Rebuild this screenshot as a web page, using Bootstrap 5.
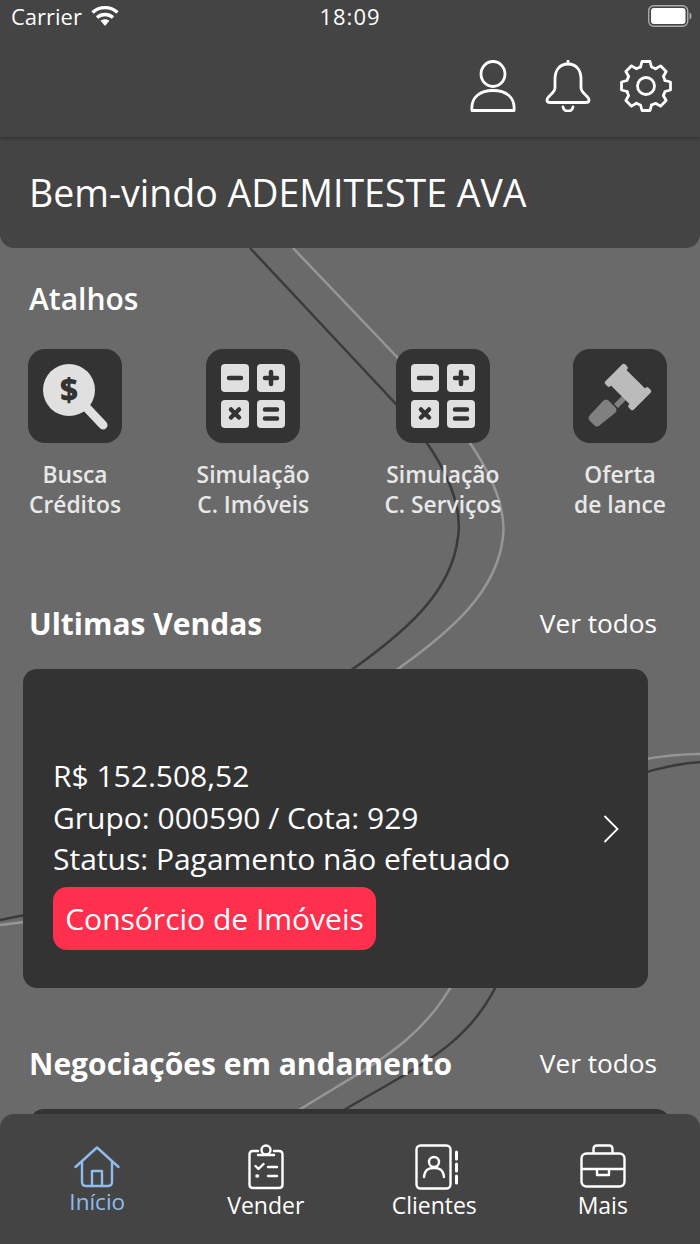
<!DOCTYPE html>
<html lang="pt-BR">
<head>
    <meta charset="UTF-8">
    <meta name="viewport" content="width=device-width, initial-scale=1.0">
    <title>Início</title>
    <link href="https://cdn.jsdelivr.net/npm/bootstrap@5.3.0/dist/css/bootstrap.min.css" rel="stylesheet">
    <style>
        html, body {
            height: 100%;
        }
        body {
            background-color: #6a6a6a;
            color: #fff;
            font-family: "Open Sans", sans-serif;
            overflow: hidden;
        }
        .phone {
            height: 1244px;
            overflow: hidden;
        }
        .bg-lines {
            left: 0;
            top: 0;
        }
        .top-head {
            height: 137px;
            background: #444;
            box-shadow: 0 1px 4px rgba(0, 0, 0, .35);
            position: relative;
        }
        .status-row {
            height: 31px;
            margin-bottom: 1px;
            padding: 0 8px 0 11px;
        }
        .status-side {
            flex: 1 1 0;
        }
        .carrier {
            font-size: 22px;
            line-height: 28px;
            gap: 9px;
        }
        .clock {
            font-size: 22px;
            line-height: 28px;
            letter-spacing: 1px;
            margin-right: 3px;
        }
        .head-icons {
            gap: 29px;
            padding: 28px 28px 0 0;
        }
        .welcome {
            height: 111px;
            background: #444;
            border-radius: 0 0 14px 14px;
            padding-left: 29px;
            font-size: 37.500px;
            line-height: 111px;
        }
        .sec-title {
            font-size: 30px;
            font-weight: 600;
            line-height: 38px;
        }
        .atalhos-title {
            padding: 32px 0 0 29px;
        }
        .shortcuts {
            padding: 31px 33px 0 28px;
        }
        .tile {
            width: 94px;
            height: 94px;
            background: #333;
            border-radius: 17px;
        }
        .short-item {
            font-size: 22.800px;
            line-height: 30px;
            font-weight: 600;
            color: #e8e8e8;
        }
        .short-mid {
            margin-left: 3px;
        }
        .short-label {
            margin-top: 17px;
            white-space: nowrap;
        }
        .sec-head {
            padding: 0 43px 0 29px;
        }
        .sec-head .sec-title {
            font-weight: 700;
        }
        .sales-head {
            margin-top: 84px;
        }
        .deals-head {
            margin-top: 56px;
        }
        .see-all {
            font-size: 26.200px;
        }
        .sale-card {
            background: #333;
            border-radius: 14px;
            height: 319px;
            width: 625px;
            margin-left: 23px;
            margin-top: 26px;
            padding: 86px 29px 0 30px;
            font-size: 30px;
            line-height: 41.500px;
        }
        .tag-pink {
            background: #ff2f4e;
            border-radius: 14px;
            height: 63px;
            width: 323px;
            line-height: 63px;
            margin-top: 7px;
            text-align: center;
        }
        .chevron {
            margin-top: 60px;
        }
        .sale-card2 {
            width: 640px;
            margin-left: 30px;
            margin-top: 25px;
        }
        .bottom-bar {
            left: 0;
            right: 0;
            bottom: 0;
            height: 130px;
            background: #444;
            border-radius: 14px 14px 0 0;
            padding: 30px 13px 0;
        }
        .tab-item {
            width: 25%;
            font-size: 23px;
            line-height: 30px;
        }
        .tab-active {
            color: #8ebcec;
            font-size: 22.500px;
        }
        .tab-ico {
            height: 46px;
        }
        .tab-active .tab-ico {
            height: 43px;
            padding-top: 2px;
        }
        .ico-shift {
            margin-left: 5px;
        }
    </style>
</head>
<body>

<div class="phone position-relative">

    <svg class="bg-lines position-absolute" width="700" height="1244" fill="none" stroke-width="2.500">
        <g stroke="#3a3a3a">
            <path d="M250 248L395 403Q415 424 427 443C452 480 462 510 458 537C452 590 410 630 340 678"/>
            <path d="M0 920L40 912L640 774Q672 764 700 762"/>
            <path d="M500 978C470 1045 420 1065 344 1110"/>
        </g>
        <g stroke="#969696">
            <path d="M293 248L397 357Q440 400 470 443C495 480 506 510 503 537C497 590 455 630 385 678"/>
            <path d="M0 925L40 920L640 760Q672 754 700 754"/>
            <path d="M456 978C420 1045 370 1065 299 1110"/>
        </g>
    </svg>

    <div class="position-relative">
        <div class="top-head">
            <div class="status-row d-flex align-items-center">
                <div class="status-side carrier d-flex align-items-center">
                    <span>Carrier</span>
                    <svg width="28" height="22" viewBox="0 0 28 22" fill="none" stroke="#fff" stroke-width="3.400">
                        <path d="M1.500 7.500C8.500 1 19.500 1 26.500 7.500"/>
                        <path d="M6 12.500C10.500 8.500 17.500 8.500 22 12.500"/>
                        <path d="M14 21l-4.400-5.200c2.600-2 6.200-2 8.800 0z" fill="#fff" stroke="none"/>
                    </svg>
                </div>
                <span class="clock">18:09</span>
                <div class="status-side d-flex justify-content-end">
                    <svg width="44" height="22" viewBox="0 0 44 22">
                        <rect x=".7" y=".7" width="39" height="20.600" rx="5" fill="none" stroke="#aaa" stroke-width="1.400"/>
                        <rect x="3" y="3" width="34.500" height="16" rx="3" fill="#fff"/>
                        <path d="M41.500 7.500c1.500.4 2 2 2 3.500s-.5 3.100-2 3.500z" fill="#aaa"/>
                    </svg>
                </div>
            </div>
            <div class="head-icons d-flex justify-content-end">
                <svg width="46" height="52" viewBox="0 0 46 52" fill="none" stroke="#fff" stroke-width="2.800">
                    <ellipse cx="23" cy="14" rx="12" ry="12.500"/>
                    <path d="M2 50.500c-1.500-14 9-20 21-20s22.500 6 21 20z" stroke-linejoin="round"/>
                </svg>
                <svg width="46" height="52" viewBox="0 0 46 52" fill="none" stroke="#fff" stroke-width="2.800" stroke-linecap="round" stroke-linejoin="round">
                    <path d="M23 1v3"/>
                    <path d="M23 4c-9 0-13 7-13 15v9c0 5-8 8-8 12 0 1.500 1 2.500 3 2.500h36c2 0 3-1 3-2.500 0-4-8-7-8-12v-9c0-8-4-15-13-15z"/>
                    <path d="M18 47c1 5.500 9 5.500 10 0"/>
                </svg>
                <svg width="52" height="52" viewBox="-26 -26 52 52" fill="none" stroke="#fff" stroke-width="2.800" stroke-linejoin="round" stroke-linecap="round">
                    <circle r="8.500"/>
                    <g id="gearTooth">
                        <path d="M-5.500-19L-4-24.500H4L5.500-19A20 20 0 0 1 9.540-17.300"/>
                    </g>
                    <use href="#gearTooth" transform="rotate(45)"/>
                    <use href="#gearTooth" transform="rotate(90)"/>
                    <use href="#gearTooth" transform="rotate(135)"/>
                    <use href="#gearTooth" transform="rotate(180)"/>
                    <use href="#gearTooth" transform="rotate(225)"/>
                    <use href="#gearTooth" transform="rotate(270)"/>
                    <use href="#gearTooth" transform="rotate(315)"/>
                </svg>
            </div>
        </div>

        <div class="welcome">Bem-vindo ADEMITESTE AVA</div>

        <div class="sec-title atalhos-title">Atalhos</div>

        <div class="shortcuts d-flex justify-content-between">
            <div class="short-item text-center d-flex flex-column align-items-center">
                <div class="tile">
                    <svg width="94" height="94" viewBox="0 0 94 94">
                        <path d="M58 58L75 76" stroke="#e0e0e0" stroke-width="9" stroke-linecap="round"/>
                        <circle cx="41" cy="41" r="26" fill="#e0e0e0"/>
                        <text x="41" y="52" text-anchor="middle" font-family="Open Sans" font-weight="800" font-size="31" fill="#333">$</text>
                    </svg>
                </div>
                <div class="short-label">Busca<br>Créditos</div>
            </div>
            <div class="short-item short-mid text-center d-flex flex-column align-items-center">
                <div class="tile">
                    <svg width="94" height="94" viewBox="0 0 94 94">
                        <use href="#calc"/>
                    </svg>
                </div>
                <div class="short-label">Simulação<br>C. Imóveis</div>
            </div>
            <div class="short-item short-mid text-center d-flex flex-column align-items-center">
                <div class="tile">
                    <svg width="94" height="94" viewBox="0 0 94 94">
                        <g id="calc">
                            <rect x="15" y="15" width="28" height="28" rx="4" fill="#e0e0e0"/>
                            <rect x="51" y="15" width="28" height="28" rx="4" fill="#e0e0e0"/>
                            <rect x="15" y="51" width="28" height="28" rx="4" fill="#e0e0e0"/>
                            <rect x="51" y="51" width="28" height="28" rx="4" fill="#e0e0e0"/>
                            <g stroke="#333" stroke-width="4.500" stroke-linecap="round">
                                <path d="M23 29h12"/>
                                <path d="M59 29h12M65 23v12"/>
                                <path d="M25 60.500l8 8M33 60.500l-8 8"/>
                                <path d="M59 60.500h12M59 69.500h12"/>
                            </g>
                        </g>
                    </svg>
                </div>
                <div class="short-label">Simulação<br>C. Serviços</div>
            </div>
            <div class="short-item text-center d-flex flex-column align-items-center">
                <div class="tile">
                    <svg width="94" height="94" viewBox="0 0 94 94">
                        <g fill="#808080">
                            <path d="M50 46l4 4-9 9-4-4z"/>
                            <path d="M30 52c2-2 4-2 6 0l6 6c2 2 2 4 0 6L27 76c-2 2-4 2-6 0l-4-4c-2-2-2-4 0-6z"/>
                        </g>
                        <g fill="#bbb" transform="rotate(45 55 38)">
                            <rect x="39" y="27" width="32" height="22"/>
                            <rect x="35" y="24" width="7" height="28" rx="2"/>
                            <rect x="68" y="24" width="7" height="28" rx="2"/>
                        </g>
                    </svg>
                </div>
                <div class="short-label">Oferta<br>de lance</div>
            </div>
        </div>

        <div class="sec-head d-flex justify-content-between align-items-center sales-head">
            <div class="sec-title">Ultimas Vendas</div>
            <div class="see-all">Ver todos</div>
        </div>

        <div class="sale-card d-flex justify-content-between">
            <div>
                <div>R$ 152.508,52</div>
                <div>Grupo: 000590 / Cota: 929</div>
                <div>Status: Pagamento não efetuado</div>
                <div class="tag-pink">Consórcio de Imóveis</div>
            </div>
            <svg class="chevron" width="16" height="28" viewBox="0 0 16 28" fill="none" stroke="#fff" stroke-width="1.800">
                <path d="M1.500 1l13 13-13 13"/>
            </svg>
        </div>

        <div class="sec-head d-flex justify-content-between align-items-center deals-head">
            <div class="sec-title">Negociações em andamento</div>
            <div class="see-all">Ver todos</div>
        </div>

        <div class="sale-card sale-card2"></div>
    </div>

    <div class="bottom-bar position-absolute d-flex text-center">
        <div class="tab-item tab-active">
            <div class="tab-ico">
                <svg width="46" height="42" viewBox="0 0 46 42" fill="none" stroke="#8ebcec" stroke-width="2.400" stroke-linecap="round" stroke-linejoin="round">
                    <path d="M1.500 21L23 1.500 44.500 21"/>
                    <path d="M8 16v20c0 2.500 1.500 4 4 4h22c2.500 0 4-1.500 4-4V16"/>
                    <path d="M18 40V25h10v15"/>
                </svg>
            </div>
            <div>Início</div>
        </div>
        <div class="tab-item">
            <div class="tab-ico">
                <svg width="36" height="46" viewBox="0 0 36 46" fill="none" stroke="#fff" stroke-width="2.400" stroke-linecap="round" stroke-linejoin="round">
                    <path d="M10 7H5C3 7 1.500 8.500 1.500 10.500v30C1.500 42.500 3 44 5 44h26c2 0 3.500-1.500 3.500-3.500v-30C34.500 8.500 33 7 31 7h-5"/>
                    <circle cx="18" cy="6" r="4.500"/>
                    <path d="M10 11h16"/>
                    <path d="M7.500 22l3 3 5-5M20 23h9M20 32h9"/>
                    <path d="M9 32h.500" stroke-width="3.500"/>
                </svg>
            </div>
            <div>Vender</div>
        </div>
        <div class="tab-item">
            <div class="tab-ico">
                <svg class="ico-shift" width="44" height="46" viewBox="0 0 44 46" fill="none" stroke="#fff" stroke-width="2.400" stroke-linecap="round" stroke-linejoin="round">
                    <rect x="1.500" y="1.500" width="34" height="43" rx="4"/>
                    <circle cx="19" cy="18" r="5"/>
                    <path d="M9 33c1-8 5-9 10-9s9 1 10 9"/>
                    <path d="M41.500 8v7M41.500 20v7M41.500 32v7" stroke-width="3"/>
                </svg>
            </div>
            <div>Clientes</div>
        </div>
        <div class="tab-item">
            <div class="tab-ico">
                <svg width="46" height="44" viewBox="0 0 46 44" fill="none" stroke="#fff" stroke-width="2.400" stroke-linejoin="round">
                    <rect x="1.500" y="9.500" width="43" height="33" rx="5"/>
                    <path d="M13.500 9V5c0-2 1-3.500 3.500-3.500h12c2.500 0 3.500 1.500 3.500 3.500v4"/>
                    <path d="M1.500 25h15M29.500 25h15"/>
                    <path d="M17 25h12v6H17z"/>
                </svg>
            </div>
            <div>Mais</div>
        </div>
    </div>
</div>

<script src="https://cdn.jsdelivr.net/npm/bootstrap@5.3.0/dist/js/bootstrap.bundle.min.js"></script>
</body>
</html>
